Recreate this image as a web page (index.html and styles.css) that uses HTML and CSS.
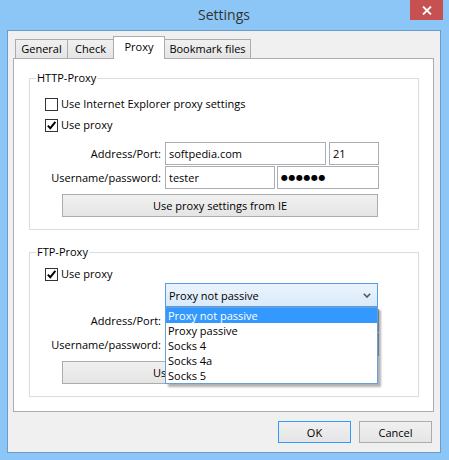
FILE: index.html
```html
<!DOCTYPE html>
<html lang="en">
<head>
    <meta charset="UTF-8">
    <title>Settings</title>
    <link rel="stylesheet" href="styles.css">
</head>
<body>
    <div class="window">
        <div class="titlebar">
            <span class="title">Settings</span>
            <button class="close-btn" aria-label="Close">
                <svg width="10" height="9" viewBox="0 0 10 9"><path d="M1 0.5 L9 8.5 M9 0.5 L1 8.5" stroke="#fff" stroke-width="1.8" fill="none"/></svg>
            </button>
        </div>

        <div class="client">
            <div class="tabs">
                <div class="tab tab-general">General</div>
                <div class="tab tab-check">Check</div>
                <div class="tab tab-proxy tab-active">Proxy</div>
                <div class="tab tab-bookmarks">Bookmark files</div>
            </div>

            <div class="panel">
                <!-- HTTP proxy -->
                <fieldset class="group group-http">
                    <legend>HTTP-Proxy</legend>
                    <label class="check-row check-first">
                        <span class="checkbox"></span>
                        Use Internet Explorer proxy settings
                    </label>
                    <label class="check-row">
                        <span class="checkbox checked">
                            <svg width="11" height="11" viewBox="0 0 11 11"><path d="M1.8 5.6 L4.3 8.2 L9.4 1.8" stroke="#000" stroke-width="1.9" fill="none"/></svg>
                        </span>
                        Use proxy
                    </label>
                    <div class="field field-first">
                        <span class="field-label">Address/Port:</span>
                        <input class="input input-address" type="text" value="softpedia.com">
                        <input class="input input-port" type="text" value="21">
                    </div>
                    <div class="field">
                        <span class="field-label">Username/password:</span>
                        <input class="input input-user" type="text" value="tester">
                        <input class="input input-pass" type="text" value="●●●●●●">
                    </div>
                    <button class="btn btn-wide">Use proxy settings from IE</button>
                </fieldset>

                <!-- FTP proxy -->
                <fieldset class="group group-ftp">
                    <legend>FTP-Proxy</legend>
                    <label class="check-row check-first-ftp">
                        <span class="checkbox checked">
                            <svg width="11" height="11" viewBox="0 0 11 11"><path d="M1.8 5.6 L4.3 8.2 L9.4 1.8" stroke="#000" stroke-width="1.9" fill="none"/></svg>
                        </span>
                        Use proxy
                    </label>
                    <div class="select-row">
                        <div class="select">
                            <span>Proxy not passive</span>
                            <svg class="chevron" width="8" height="5" viewBox="0 0 8 5"><path d="M0.8 0.8 L4 4 L7.2 0.8" stroke="#555" stroke-width="1.6" fill="none"/></svg>
                            <ul class="dropdown">
                                <li class="selected">Proxy not passive</li>
                                <li>Proxy passive</li>
                                <li>Socks 4</li>
                                <li>Socks 4a</li>
                                <li>Socks 5</li>
                            </ul>
                        </div>
                    </div>
                    <div class="field field-ftp">
                        <span class="field-label">Address/Port:</span>
                        <input class="input input-address" type="text" value="">
                        <input class="input input-port" type="text" value="">
                    </div>
                    <div class="field">
                        <span class="field-label">Username/password:</span>
                        <input class="input input-user" type="text" value="">
                        <input class="input input-pass" type="text" value="">
                    </div>
                    <button class="btn btn-wide">Use proxy settings from IE</button>
                </fieldset>
            </div>

            <div class="actions">
                <button class="btn btn-default">OK</button>
                <button class="btn">Cancel</button>
            </div>
        </div>
    </div>
</body>
</html>
```

FILE: styles.css
```css
body {
    margin: 0;
    font-family: "Open Sans", "Segoe UI", sans-serif;
    font-size: 11px;
    color: #000;
    background: #fff;
}

.window {
    width: 449px;
    height: 460px;
    box-sizing: border-box;
    background-color: #8bc6f6;
    padding: 0 8px 7px 7px;
    display: flex;
    flex-direction: column;
}

/* title bar */
.titlebar {
    height: 30px;
    display: grid;
    grid-template-columns: 1fr auto 1fr;
    align-items: start;
}

.title {
    grid-column: 2;
    font-size: 14px;
    line-height: 18px;
    padding-top: 6px;
    color: #333;
}

.close-btn {
    grid-column: 3;
    justify-self: end;
    margin-right: -2px;
    width: 33px;
    height: 20px;
    border: none;
    padding: 0;
    background-color: #c75050;
    display: flex;
    align-items: center;
    justify-content: center;
}

/* client area */
.client {
    flex: 1;
    border: 1px solid #6d9cc8;
    background-color: #f0f0f0;
    display: flex;
    flex-direction: column;
}

.tabs {
    display: flex;
    align-items: flex-end;
    height: 22px;
    margin-top: 5px;
    padding-left: 7px;
}

.tab {
    height: 18px;
    line-height: 18px;
    box-sizing: content-box;
    text-align: center;
    border: 1px solid #acacac;
    border-bottom: none;
    margin-left: -1px;
    background: linear-gradient(#f0f0f0, #e5e5e5);
}

.tab:first-child {
    margin-left: 0;
}

.tab-general { width: 51px; }
.tab-check { width: 45px; }
.tab-proxy { width: 50px; }
.tab-bookmarks { width: 85px; }

.tab-active {
    height: 22px;
    line-height: 20px;
    margin-bottom: -1px;
    background: #fff;
    position: relative;
    z-index: 1;
}

.panel {
    height: 354px;
    box-sizing: border-box;
    margin: 0 6px 0 5px;
    border: 1px solid #acacac;
    background-color: #fff;
    padding-top: 11px;
}

/* group boxes */
.group {
    margin: 0 14px 0 15px;
    padding: 0 0 12px 0;
    border: 1px solid #dcdcdc;
    min-width: 0;
}

.group-ftp {
    margin-top: 14px;
}

.group legend {
    margin-left: 6px;
    padding: 0 1px;
    line-height: 16px;
}

.check-row {
    display: flex;
    align-items: center;
    gap: 3px;
    line-height: 16px;
    padding-left: 15px;
    margin-top: 5px;
}

.check-first {
    margin-top: 10px;
}

.check-first-ftp {
    margin-top: 6px;
}

.checkbox {
    width: 11px;
    height: 11px;
    border: 1px solid #333;
    background-color: #fff;
    display: flex;
}

.field {
    display: flex;
    align-items: center;
    margin-top: 1px;
}

.field-first {
    margin-top: 9px;
}

.field-ftp {
    margin-top: 2px;
}

.field-label {
    width: 131px;
    margin-right: 4px;
    text-align: right;
}

.input {
    height: 23px;
    box-sizing: border-box;
    border: 1px solid #abadb3;
    padding: 0 3px;
    margin: 0;
    font: inherit;
    color: #000;
    outline: none;
}

.input-address { width: 161px; }
.input-port { width: 50px; margin-left: 3px; }
.input-user { width: 110px; }

.input-pass {
    width: 102px;
    margin-left: 2px;
    font-family: "DejaVu Sans", sans-serif;
    font-size: 8px;
    letter-spacing: 0.5px;
}

/* buttons */
.btn {
    height: 22px;
    box-sizing: border-box;
    border: 1px solid #acacac;
    background: linear-gradient(#f0f0f0, #e5e5e5);
    font: inherit;
    color: #000;
    padding: 0;
}

.btn-wide {
    display: block;
    width: 316px;
    height: 23px;
    margin: 5px 0 0 32px;
}

.btn-default {
    border-color: #3399ff;
}

.actions {
    display: flex;
    justify-content: flex-end;
    gap: 8px;
    padding: 9px 8px 0 0;
}

.actions .btn {
    width: 73px;
}

/* combo box with open list */
.select-row {
    padding-left: 135px;
    margin-top: 1px;
}

.select {
    position: relative;
    width: 213px;
    height: 24px;
    box-sizing: border-box;
    border: 1px solid #569de5;
    background: linear-gradient(#ebf4fc, #d9eafb);
    display: flex;
    align-items: center;
    justify-content: space-between;
    padding: 0 6px 0 3px;
}

.chevron {
    margin-top: 1px;
}

.dropdown {
    position: absolute;
    top: calc(100% + 1px);
    left: -1px;
    width: 213px;
    box-sizing: border-box;
    margin: 0;
    padding: 0;
    list-style: none;
    background-color: #fff;
    border: 1px solid #6a9fd6;
    box-shadow: 3px 3px 2px rgba(0, 0, 0, 0.3);
    z-index: 5;
}

.dropdown li {
    line-height: 15px;
    padding-left: 2px;
}

.dropdown .selected {
    background-color: #3399ff;
    color: #fff;
}
```
